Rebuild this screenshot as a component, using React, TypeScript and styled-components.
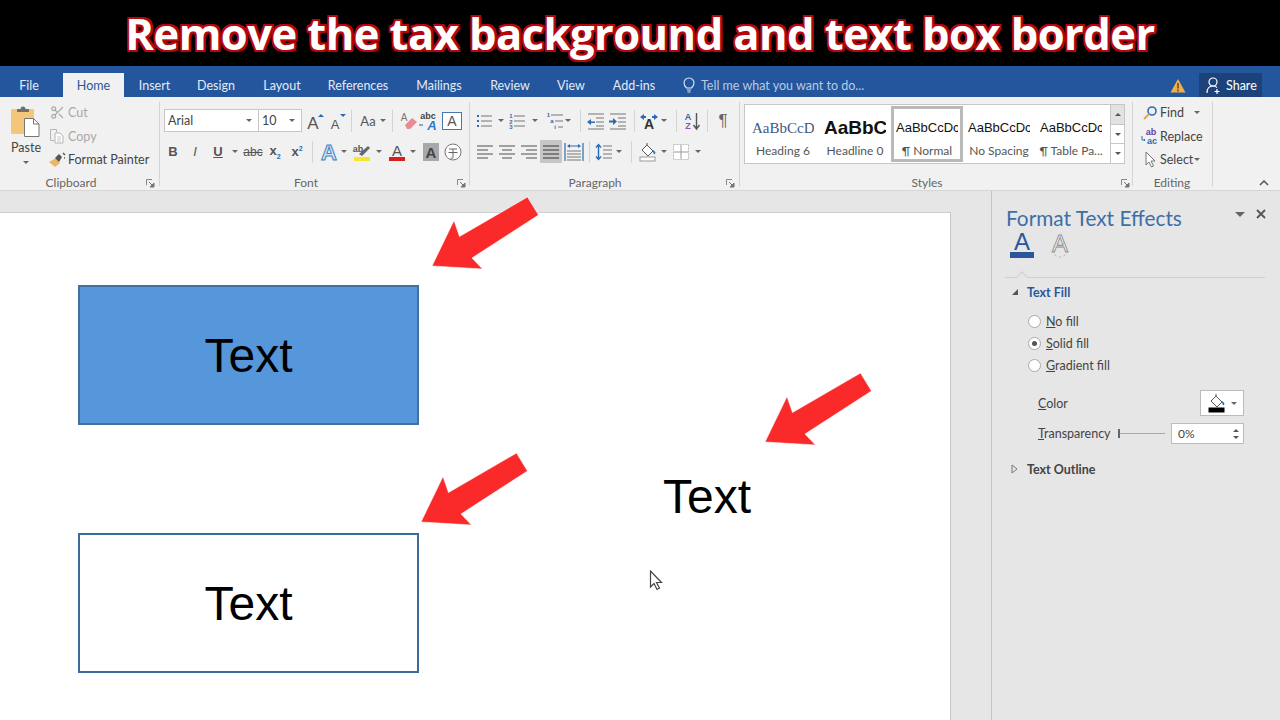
import React from 'react';
import styled, { createGlobalStyle } from 'styled-components';
import { Scissors } from 'lucide-react';

const UI_FONT = `Lato, "Open Sans", sans-serif`;

const GlobalStyle = createGlobalStyle`
    html, body {
        margin: 0;
        padding: 0;
        background: #fff;
    }
    * {
        box-sizing: border-box;
    }
`;

const Page = styled.div`
    display: flex;
    flex-direction: column;
    width: 1280px;
    height: 720px;
    overflow: hidden;
    font-family: ${UI_FONT};
    font-size: 12.5px;
    color: #444;
`;

const Banner = styled.h1`
    flex: 0 0 66px;
    margin: 0;
    display: flex;
    align-items: center;
    justify-content: center;
    background: #000;
    color: #fff;
    font-family: "Open Sans", sans-serif;
    font-size: 43.5px;
    font-weight: 700;
    letter-spacing: -0.55px;
    white-space: nowrap;
    text-shadow: 2px 0 0 #b5060b, -2px 0 0 #b5060b, 0 2px 0 #b5060b, 0 -2px 0 #b5060b,
        2px 2px 0 #b5060b, -2px 2px 0 #b5060b, 2px -2px 0 #b5060b, -2px -2px 0 #b5060b;
`;

const TabBar = styled.div`
    flex: 0 0 31px;
    display: flex;
    align-items: flex-end;
    background: #23569c;
    color: #e4ebf5;
`;

const Tab = styled.div<{ $w: number; $ml?: number; $active?: boolean }>`
    display: flex;
    align-items: center;
    justify-content: center;
    width: ${({ $w }) => $w}px;
    height: 24px;
    margin-left: ${({ $ml }) => $ml ?? 0}px;
    background: ${({ $active }) => ($active ? '#f1f1f1' : 'transparent')};
    color: ${({ $active }) => ($active ? '#2b579a' : 'inherit')};
`;

const TellMe = styled.div`
    display: flex;
    align-items: center;
    gap: 6px;
    height: 24px;
    margin-left: 16px;
    color: #b9cbe4;
`;

const WarnSlot = styled.div`
    display: flex;
    align-items: center;
    height: 24px;
    margin-left: auto;
    margin-right: 13px;
`;

const ShareButton = styled.div`
    display: flex;
    align-items: center;
    gap: 5px;
    width: 63px;
    height: 24px;
    margin-right: 18px;
    padding-left: 7px;
    background: #1c4279;
    color: #fff;
`;

const Ribbon = styled.div`
    flex: 0 0 94px;
    display: flex;
    position: relative;
    background: #f1f1f1;
    border-bottom: 1px solid #d6d6d6;
`;

const Group = styled.div<{ $w: number }>`
    position: relative;
    flex: 0 0 ${({ $w }) => $w}px;
    padding-top: 12px;
    &::after {
        content: '';
        position: absolute;
        right: 0;
        top: 5px;
        bottom: 4px;
        width: 1px;
        background: #d4d4d4;
    }
`;

const GroupLabel = styled.div<{ $center: number }>`
    position: absolute;
    top: 78px;
    left: ${({ $center }) => $center}px;
    transform: translateX(-50%);
    color: #666;
    font-size: 12px;
    line-height: 16px;
`;

const Launcher = styled.svg<{ $left: number }>`
    position: absolute;
    top: 82px;
    left: ${({ $left }) => $left}px;
`;

const ToolRow = styled.div<{ $top?: number; $pl?: number }>`
    display: flex;
    align-items: center;
    height: 23px;
    margin-top: ${({ $top }) => $top ?? 0}px;
    padding-left: ${({ $pl }) => $pl ?? 0}px;
`;

const Tool = styled.div<{ $w?: number; $ml?: number; $on?: boolean }>`
    display: flex;
    align-items: center;
    justify-content: center;
    flex: 0 0 ${({ $w }) => $w ?? 22}px;
    height: 23px;
    margin-left: ${({ $ml }) => $ml ?? 0}px;
    background: ${({ $on }) => ($on ? '#c6c6c6' : 'transparent')};
    font-size: 13px;
    color: #555;
`;

const Caret = styled.span<{ $w?: number; $ml?: number }>`
    flex: 0 0 ${({ $w }) => $w ?? 8}px;
    margin-left: ${({ $ml }) => $ml ?? 0}px;
    height: 4px;
    position: relative;
    &::before {
        content: '';
        position: absolute;
        left: 50%;
        top: 0;
        margin-left: -3px;
        border-left: 3px solid transparent;
        border-right: 3px solid transparent;
        border-top: 3px solid #666;
    }
`;

const Divider = styled.span<{ $ml: number; $mr?: number }>`
    flex: 0 0 1px;
    height: 22px;
    margin-left: ${({ $ml }) => $ml}px;
    margin-right: ${({ $mr }) => $mr ?? 0}px;
    background: #d4d4d4;
`;

const ClipboardBody = styled.div`
    display: flex;
    margin-top: -4px;
`;

const PasteColumn = styled.div`
    display: flex;
    flex-direction: column;
    align-items: center;
    flex: 0 0 49px;
    padding-left: 3px;
    padding-top: 1px;
    font-size: 12.5px;
    color: #444;
`;

const PasteLabel = styled.span`
    margin-top: 3px;
    line-height: 16px;
`;

const PasteCaret = styled.span`
    margin-top: 5px;
    border-left: 3px solid transparent;
    border-right: 3px solid transparent;
    border-top: 3px solid #666;
`;

const ClipList = styled.div`
    display: flex;
    flex-direction: column;
    margin-top: -4px;
`;

const ClipRow = styled.div<{ $muted?: boolean }>`
    display: flex;
    align-items: center;
    height: 23.5px;
    gap: 3px;
    color: ${({ $muted }) => ($muted ? '#a8a8a8' : '#444')};
`;

const ClipIcon = styled.span`
    display: flex;
    justify-content: center;
    width: 16px;
`;

const ComboBox = styled.div<{ $w: number }>`
    display: flex;
    align-items: center;
    justify-content: space-between;
    width: ${({ $w }) => $w}px;
    height: 23px;
    padding: 0 6px 0 3px;
    background: #fff;
    border: 1px solid #c6c6c6;
    color: #444;
    &:not(:first-child) {
        margin-left: -1px;
    }
`;

const DownTriangle = styled.span`
    border-left: 3px solid transparent;
    border-right: 3px solid transparent;
    border-top: 3px solid #666;
`;

const Gallery = styled.div`
    display: flex;
    width: 381px;
    height: 60px;
    margin: -5px 0 0 4px;
    padding-left: 2px;
    background: #fff;
    border: 1px solid #c6c6c6;
`;

const StyleCell = styled.div<{ $active?: boolean }>`
    flex: 0 0 72px;
    display: flex;
    flex-direction: column;
    align-items: center;
    justify-content: space-between;
    padding: ${({ $active }) => ($active ? '7px 0 0' : '10px 0 3px')};
    overflow: hidden;
    border: ${({ $active }) => ($active ? '3px solid #b9b9b9' : 'none')};
    margin: 1px 0;
`;

const StylePreview = styled.div<{ $kind: 'serif' | 'heavy' | 'plain' }>`
    width: 62px;
    height: 24px;
    overflow: hidden;
    white-space: nowrap;
    line-height: 24px;
    text-align: ${({ $kind }) => ($kind === 'heavy' ? 'center' : 'left')};
    font-family: ${({ $kind }) =>
        $kind === 'serif' ? '"Liberation Serif", serif' : '"Liberation Sans", sans-serif'};
    font-size: ${({ $kind }) => ({ serif: '15px', heavy: '19px', plain: '13px' }[$kind])};
    font-weight: ${({ $kind }) => ($kind === 'heavy' ? 700 : 400)};
    color: ${({ $kind }) => ($kind === 'serif' ? '#3c5a80' : '#111')};
`;

const StyleName = styled.div`
    font-size: 12px;
    line-height: 16px;
    color: #555;
    white-space: nowrap;
`;

const GalleryScroll = styled.div`
    display: flex;
    flex-direction: column;
    width: 14px;
    margin-left: 3px;
`;

const ScrollCell = styled.div<{ $flat?: boolean }>`
    flex: 1;
    display: flex;
    align-items: center;
    justify-content: center;
    background: ${({ $flat }) => ($flat ? '#e2e2e2' : '#fff')};
    border-left: 1px solid #c6c6c6;
    & + & {
        border-top: 1px solid #c6c6c6;
    }
`;

const EditList = styled.div`
    display: flex;
    flex-direction: column;
    margin-top: -8px;
    padding-left: 6px;
`;

const EditRow = styled.div`
    display: flex;
    align-items: center;
    height: 23.5px;
    color: #444;
`;

const EditIcon = styled.span`
    display: flex;
    justify-content: center;
    width: 21px;
`;

const CollapseSlot = styled.div`
    position: absolute;
    top: 83px;
    right: 11px;
    line-height: 0;
`;

const Workspace = styled.div`
    flex: 1;
    display: flex;
    min-height: 0;
`;

const DocColumn = styled.div`
    flex: 0 0 992px;
    display: flex;
    flex-direction: column;
    background: #e6e6e6;
    border-right: 1px solid #c4c4c4;
`;

const DocGap = styled.div`
    flex: 0 0 21px;
`;

const Sheet = styled.div`
    position: relative;
    flex: 1;
    width: 951px;
    background: #fff;
    border-top: 1px solid #cfcfcf;
    border-right: 1px solid #c6c6c6;
`;

const TextShape = styled.div<{ $top: number; $filled?: boolean }>`
    position: absolute;
    left: 78px;
    top: ${({ $top }) => $top}px;
    display: flex;
    align-items: center;
    justify-content: center;
    width: 341px;
    height: 140px;
    background: ${({ $filled }) => ($filled ? '#5597da' : '#fff')};
    border: 2px solid ${({ $filled }) => ($filled ? '#41719c' : '#3c6a9c')};
    font-family: "Liberation Sans", Arial, sans-serif;
    font-size: 48px;
    color: #000;
`;

const LooseText = styled.div`
    position: absolute;
    left: 663px;
    top: 258px;
    font-family: "Liberation Sans", Arial, sans-serif;
    font-size: 48px;
    line-height: 52px;
    color: #000;
`;

const ArrowMark = styled.svg<{ $left: number; $top: number }>`
    position: absolute;
    left: ${({ $left }) => $left}px;
    top: ${({ $top }) => $top}px;
`;

const MouseCursor = styled.svg`
    position: absolute;
    left: 649px;
    top: 357px;
`;

const Pane = styled.aside`
    flex: 1;
    background: #e6e6e6;
    padding: 12px 0 0 14px;
`;

const PaneHeader = styled.div`
    display: flex;
    align-items: center;
    height: 28px;
`;

const PaneTitle = styled.div`
    font-size: 20.8px;
    color: #3d6ea8;
    white-space: nowrap;
`;

const PaneControls = styled.div`
    display: flex;
    align-items: center;
    gap: 11px;
    margin-left: auto;
    margin-right: 14px;
    margin-top: -6px;
`;

const PaneMenuArrow = styled.span`
    border-left: 5px solid transparent;
    border-right: 5px solid transparent;
    border-top: 5px solid #666;
`;

const PaneTabs = styled.div`
    display: flex;
    gap: 15px;
    height: 28px;
    margin: 0 0 0 4px;
`;

const PaneRule = styled.div`
    position: relative;
    width: 260px;
    height: 1px;
    margin: 18px 0 0 -1px;
    background: #cfcfcf;
    &::after {
        content: '';
        position: absolute;
        left: 13px;
        top: -4px;
        width: 7px;
        height: 7px;
        background: #e6e6e6;
        border-left: 1px solid #cfcfcf;
        border-top: 1px solid #cfcfcf;
        transform: rotate(45deg);
    }
`;

const SectionHead = styled.div<{ $top: number; $open?: boolean }>`
    display: flex;
    align-items: center;
    height: 20px;
    margin-top: ${({ $top }) => $top}px;
    font-weight: 700;
    font-size: 12.5px;
    color: ${({ $open }) => ($open ? '#2b579a' : '#444')};
`;

const SectionToggle = styled.span`
    display: flex;
    flex: 0 0 21px;
    padding-left: 5px;
`;

const RadioList = styled.div`
    margin-top: 8px;
    padding-left: 22px;
`;

const RadioRow = styled.div`
    display: flex;
    align-items: center;
    gap: 5px;
    height: 22px;
`;

const RadioDot = styled.span<{ $on?: boolean }>`
    display: flex;
    align-items: center;
    justify-content: center;
    width: 13px;
    height: 13px;
    border-radius: 50%;
    background: #fff;
    border: 1px solid #a9a9a9;
    &::after {
        content: '';
        width: 5px;
        height: 5px;
        border-radius: 50%;
        background: ${({ $on }) => ($on ? '#555' : 'transparent')};
    }
`;

const FieldRow = styled.div<{ $top: number; $h: number }>`
    display: flex;
    align-items: center;
    width: 238px;
    height: ${({ $h }) => $h}px;
    margin-top: ${({ $top }) => $top}px;
    padding-left: 32px;
`;

const FieldLabel = styled.span<{ $w: number }>`
    flex: 0 0 ${({ $w }) => $w}px;
`;

const ColorButton = styled.div`
    display: flex;
    align-items: center;
    justify-content: center;
    gap: 5px;
    width: 44px;
    height: 26px;
    margin-left: auto;
    background: #fff;
    border: 1px solid #bcbcbc;
`;

const Slider = styled.div`
    position: relative;
    flex: 0 0 47px;
    height: 1px;
    background: #a8a8a8;
    &::before {
        content: '';
        position: absolute;
        left: 0;
        top: -4px;
        width: 2px;
        height: 9px;
        background: #666;
    }
`;

const SpinBox = styled.div`
    display: flex;
    align-items: center;
    justify-content: space-between;
    width: 73px;
    height: 21px;
    margin-left: 6px;
    padding: 0 4px 0 6px;
    background: #fff;
    border: 1px solid #bcbcbc;
    font-size: 12px;
`;

const SpinArrows = styled.span`
    display: flex;
    flex-direction: column;
    gap: 4px;
`;

const SpinUp = styled.span`
    border-left: 3px solid transparent;
    border-right: 3px solid transparent;
    border-bottom: 3px solid #555;
`;

const SpinDown = styled.span`
    border-left: 3px solid transparent;
    border-right: 3px solid transparent;
    border-top: 3px solid #555;
`;

const Glyph2 = styled.span<{ $bold?: boolean; $italic?: boolean; $under?: boolean }>`
    font-family: "Liberation Sans", sans-serif;
    font-size: 13px;
    font-weight: ${({ $bold, $under }) => ($bold || $under ? 700 : 400)};
    font-style: ${({ $italic }) => ($italic ? 'italic' : 'normal')};
    text-decoration: ${({ $under }) => ($under ? 'underline' : 'none')};
`;

const Strike = styled.span`
    font-family: "Liberation Sans", sans-serif;
    font-size: 12px;
    text-decoration: line-through;
`;

const Sub = styled.sub`
    font-size: 7px;
    color: #2b6cb0;
`;

const Sup = styled.sup`
    font-size: 7px;
    color: #2b6cb0;
`;

const Pilcrow = styled.span`
    font-family: "Liberation Sans", sans-serif;
    font-size: 17px;
    color: #666;
`;

const Glyph = (p: {
    x: number;
    y: number;
    size: number;
    fill?: string;
    bold?: boolean;
    italic?: boolean;
    serif?: boolean;
    children: React.ReactNode;
}) => (
    <text
        x={p.x}
        y={p.y}
        fontSize={p.size}
        fill={p.fill ?? '#555'}
        fontWeight={p.bold ? 700 : 400}
        fontStyle={p.italic ? 'italic' : 'normal'}
        fontFamily={p.serif ? '"Liberation Serif", serif' : '"Liberation Sans", sans-serif'}
        textAnchor="middle"
    >
        {p.children}
    </text>
);

const Icon = ({ w = 20, h = 20, children }: { w?: number; h?: number; children: React.ReactNode }) => (
    <svg width={w} height={h} viewBox={`0 0 ${w} ${h}`} overflow="visible">
        {children}
    </svg>
);

const PasteIcon = () => (
    <Icon w={30} h={31}>
        <rect x="0" y="3" width="23" height="25" rx="1" fill="#f4c67c" />
        <path d="M6 6V3h3.500a2.500 2.500 0 0 1 5 0H18v3z" fill="#6f6f6f" />
        <path d="M13.500 12.500h9l5.500 5.500v12.500H13.500z" fill="#fff" stroke="#777" />
        <path d="M22.500 12.500V18H28" fill="none" stroke="#777" />
    </Icon>
);

const CopyIcon = () => (
    <Icon w={16} h={16}>
        <path d="M1.500 1.500h6v3M1.500 1.500v11h4" fill="none" stroke="#b5b5b5" />
        <path d="M6 5h5l3 3v7H6z" fill="#fff" stroke="#b5b5b5" />
        <path d="M8 9h4M8 11h4M8 13h4" stroke="#c5c5c5" />
    </Icon>
);

const BrushIcon = () => (
    <Icon w={18} h={16}>
        <path d="M1 10l7-4 4 5-5 4z" fill="#eeb566" />
        <path d="M7 6l4-4 3 3-3 5z" fill="#555" />
        <path d="M15 1l2 2M16 6l1 0" stroke="#555" strokeWidth="1.4" />
    </Icon>
);

const Launch = ({ left }: { left: number }) => (
    <Launcher $left={left} width="9" height="9" viewBox="0 0 9 9">
        <path d="M.5 6V.5H6" fill="none" stroke="#888" />
        <path d="M3 3l4 4M8 4v4H4z" stroke="#777" fill="#777" />
    </Launcher>
);

const ListLines = ({ x = 6, w = 11 }: { x?: number; w?: number }) => (
    <path d={`M${x} 5h${w}M${x} 10h${w}M${x} 15h${w}`} stroke="#777" strokeWidth="1.2" />
);

const BulletIcon = () => (
    <Icon>
        <ListLines />
        <path d="M2 5h2M2 10h2M2 15h2" stroke="#2b6cb0" strokeWidth="2.2" />
    </Icon>
);

const NumberIcon = () => (
    <Icon>
        <ListLines />
        <Glyph x={3} y={7} size={6} fill="#2b6cb0" bold>1</Glyph>
        <Glyph x={3} y={12.5} size={6} fill="#2b6cb0" bold>2</Glyph>
        <Glyph x={3} y={18} size={6} fill="#2b6cb0" bold>3</Glyph>
    </Icon>
);

const MultiIcon = () => (
    <Icon w={18}>
        <path d="M5 4h12M9 10h8M12 16h5" stroke="#777" strokeWidth="1.2" />
        <Glyph x={2.5} y={6} size={6} fill="#2b6cb0" bold>1</Glyph>
        <Glyph x={6} y={12} size={6} fill="#2b6cb0" bold>a</Glyph>
        <Glyph x={9} y={18} size={6} fill="#2b6cb0" bold>i</Glyph>
    </Icon>
);

const IndentIcon = ({ flip }: { flip?: boolean }) => (
    <Icon>
        <path d="M2 3h16M10 7h8M10 11h8M10 15h8M2 18h16" stroke="#777" strokeWidth="1.1" />
        {flip ? (
            <path d="M9 10.500H5V8l-4 3 4 3v-2h4z" fill="#2b6cb0" />
        ) : (
            <path d="M1 9.500h4V7l4 3.500L5 14v-2.500H1z" fill="#2b6cb0" />
        )}
    </Icon>
);

const TextDirIcon = () => (
    <Icon>
        <Glyph x={10} y={18} size={14} fill="#333" bold>A</Glyph>
        <path d="M1 6l4-3v2h2v2H5v2zM19 6l-4-3v2h-2v2h2v2z" fill="#2b6cb0" />
    </Icon>
);

const SortIcon = () => (
    <Icon>
        <Glyph x={6} y={9} size={9} fill="#2b6cb0" bold>A</Glyph>
        <Glyph x={6} y={18} size={9} fill="#9a4fb5" bold>Z</Glyph>
        <path d="M14.500 2v15M11.500 14l3 4 3-4" fill="none" stroke="#555" strokeWidth="1.4" />
    </Icon>
);

const AlignIcon = ({ mode }: { mode: 'left' | 'center' | 'right' | 'full' }) => {
    const paths = {
        left: 'M2 4h16M2 8h11M2 12h16M2 16h11',
        center: 'M2 4h16M5 8h10M2 12h16M5 16h10',
        right: 'M2 4h16M7 8h11M2 12h16M7 16h11',
        full: 'M2 4h16M2 8h16M2 12h16M2 16h16',
    };
    return (
        <Icon>
            <path d={paths[mode]} stroke={mode === 'full' ? '#666' : '#858585'} strokeWidth="1.3" />
        </Icon>
    );
};

const DistributeIcon = () => (
    <Icon>
        <path d="M1 1v18M19 1v18" stroke="#2b6cb0" strokeWidth="1.2" />
        <path d="M3 9h14M3 12h14M3 15h14M3 18h14" stroke="#777" />
        <path d="M3 4l3-2v1.500h8V2l3 2-3 2V4.500H6V6z" fill="#2b6cb0" />
    </Icon>
);

const LineSpacingIcon = () => (
    <Icon>
        <path d="M9 4h9M9 8h9M9 12h9M9 16h9" stroke="#777" strokeWidth="1.2" />
        <path d="M4.500 3v14M2 5.500l2.500-3 2.500 3M2 14.500l2.500 3 2.500-3" fill="none" stroke="#2b6cb0" strokeWidth="1.4" />
    </Icon>
);

const BucketIcon = ({ bar = '#fff' }: { bar?: string }) => (
    <Icon w={18} h={18}>
        <path d="M8 2l6 6-5 5-6-6z" fill="#fff" stroke="#555" />
        <path d="M8 2V0" stroke="#555" />
        <path d="M14 7c2 1 3 3 2 4s-2-1-2-4z" fill="#2b6cb0" />
        <rect x="1" y="14" width="15" height="4" fill={bar} stroke={bar === '#fff' ? '#999' : bar} />
    </Icon>
);

const BordersIcon = () => (
    <Icon>
        <rect x="2.500" y="2.500" width="15" height="15" fill="#fff" stroke="#bbb" strokeDasharray="2 1" />
        <path d="M10 3v14M3 10h14" stroke="#999" />
    </Icon>
);

const GrowFontIcon = ({ shrink }: { shrink?: boolean }) => (
    <Icon>
        <Glyph x={8} y={18} size={shrink ? 13 : 17}>A</Glyph>
        {shrink ? (
            <path d="M13 3h6l-3 3z" fill="#2b6cb0" />
        ) : (
            <path d="M13 6h6l-3-3z" fill="#2b6cb0" />
        )}
    </Icon>
);

const EraserIcon = () => (
    <Icon>
        <Glyph x={6} y={10} size={10} fill="#777">A</Glyph>
        <path d="M7 14l7-7 5 4-7 7h-3z" fill="#ea8a92" />
    </Icon>
);

const TextEffectIcon = () => (
    <Icon w={22}>
        <Glyph x={9} y={8} size={9} fill="#444" bold>abc</Glyph>
        <Glyph x={13} y={19} size={13} fill="#2b7cd3" bold italic>A</Glyph>
        <path d="M0 14h4" stroke="#2b7cd3" strokeWidth="1.2" />
    </Icon>
);

const BoxedAIcon = () => (
    <Icon>
        <rect x=".5" y="1.500" width="19" height="17" fill="#fff" stroke="#4a78ad" />
        <Glyph x={10} y={15} size={14}>A</Glyph>
    </Icon>
);

const OutlineAIcon = () => (
    <Icon w={22} h={22}>
        <Glyph x={11} y={19} size={22} fill="#d5e6f7" bold>A</Glyph>
        <text
            x="11"
            y="19"
            fontSize="22"
            fontWeight="700"
            textAnchor="middle"
            fontFamily={'"Liberation Sans", sans-serif'}
            fill="none"
            stroke="#3f7fc4"
            strokeWidth="1"
        >
            A
        </text>
    </Icon>
);

const HighlightIcon = () => (
    <Icon w={20} h={20}>
        <Glyph x={6} y={10} size={9} fill="#555" bold>ab</Glyph>
        <path d="M7 12l9-8 2 2-8 8z" fill="#666" />
        <rect x="2" y="15" width="16" height="4" fill="#f7e62e" />
    </Icon>
);

const FontColorIcon = () => (
    <Icon w={20} h={20}>
        <Glyph x={10} y={14} size={15}>A</Glyph>
        <rect x="2" y="15" width="16" height="4" fill="#d81f1f" />
    </Icon>
);

const ShadedAIcon = () => (
    <Icon w={16} h={18}>
        <rect width="16" height="18" y="0" fill="#a8a8a8" />
        <Glyph x={8} y={15} size={15} fill="#444" bold>A</Glyph>
    </Icon>
);

const EnclosedIcon = () => (
    <Icon>
        <circle cx="10" cy="10" r="8" fill="#fff" stroke="#777" />
        <path d="M6 7h8M5.500 10.500h9M10 7v8c0 1.500-1 1.500-2.500 1" fill="none" stroke="#666" />
    </Icon>
);

const FindIcon = () => (
    <Icon w={16} h={16}>
        <circle cx="10" cy="6" r="4" fill="none" stroke="#2b6cb0" strokeWidth="1.6" />
        <path d="M7 9l-5 5" stroke="#e0a94d" strokeWidth="2" />
    </Icon>
);

const ReplaceIcon = () => (
    <Icon w={18} h={18}>
        <Glyph x={10} y={8} size={9} fill="#6b3fa0" bold>ab</Glyph>
        <Glyph x={11} y={16.500} size={9} fill="#2b6cb0" bold>ac</Glyph>
        <path d="M1 9v4h2M3 12l1 1-1 1" fill="none" stroke="#2b6cb0" />
    </Icon>
);

const SelectIcon = () => (
    <Icon w={14} h={18}>
        <path d="M3 1v13l3-3 2.500 5 2-1-2.500-5h4z" fill="#fff" stroke="#777" />
    </Icon>
);

const BulbIcon = () => (
    <Icon w={12} h={16}>
        <path
            d="M3.500 11C2 9.500 1 8.500 1 6a5 5 0 0 1 10 0c0 2.500-1 3.500-2.500 5zM4 13h4M4.500 15h3"
            fill="none"
            stroke="#dfe8f4"
            strokeWidth="1.1"
        />
    </Icon>
);

const WarnIcon = () => (
    <Icon w={16} h={15}>
        <path d="M8 1l7.500 13.500H.5z" fill="#eeb04f" />
        <path d="M8 5v5.500M8 11.500v2" stroke="#7a4a10" strokeWidth="1.6" />
    </Icon>
);

const ShareIcon = () => (
    <Icon w={15} h={17}>
        <circle cx="7" cy="5" r="4" fill="none" stroke="#fff" strokeWidth="1.2" />
        <path d="M1 16c0-5 2-7 6-7 2 0 3 .5 4 1.500M11 12v5M8.500 14.500h5" fill="none" stroke="#fff" strokeWidth="1.2" />
    </Icon>
);

const ArrowShape = ({ left, top }: { left: number; top: number }) => (
    <ArrowMark $left={left} $top={top} width="110" height="76" viewBox="0 0 110 76">
        <path
            d="M0 71L22 25.500 27.500 41.500 95.500 2 106.500 20 40 63 50.500 74z"
            fill="#fb2a2a"
            stroke="#fff"
            strokeWidth="0.6"
        />
    </ArrowMark>
);

const tabs: [string, number, number?, boolean?][] = [
    ['File', 58],
    ['Home', 61, 5, true],
    ['Insert', 61],
    ['Design', 62],
    ['Layout', 70],
    ['References', 82],
    ['Mailings', 80],
    ['Review', 62],
    ['View', 60],
    ['Add-ins', 66],
];

const styleCells = [
    { preview: 'AaBbCcDc', name: 'Heading 6', kind: 'serif' as const },
    { preview: 'AaBbCcDc', name: 'Headline 0', kind: 'heavy' as const },
    { preview: 'AaBbCcDc', name: '¶ Normal', kind: 'plain' as const, active: true },
    { preview: 'AaBbCcDc', name: 'No Spacing', kind: 'plain' as const },
    { preview: 'AaBbCcDc', name: '¶ Table Pa...', kind: 'plain' as const },
];

const App = () => (
    <>
        <GlobalStyle />
        <Page>
            <Banner>Remove the tax background and text box border</Banner>

            <TabBar>
                {tabs.map(([label, w, ml, active]) => (
                    <Tab key={label} $w={w} $ml={ml} $active={active}>
                        {label}
                    </Tab>
                ))}
                <TellMe>
                    <BulbIcon />
                    Tell me what you want to do...
                </TellMe>
                <WarnSlot>
                    <WarnIcon />
                </WarnSlot>
                <ShareButton>
                    <ShareIcon />
                    Share
                </ShareButton>
            </TabBar>

            <Ribbon>
                <Group $w={160}>
                    <ClipboardBody>
                        <PasteColumn>
                            <PasteIcon />
                            <PasteLabel>Paste</PasteLabel>
                            <PasteCaret />
                        </PasteColumn>
                        <ClipList>
                            <ClipRow $muted>
                                <ClipIcon>
                                    <Scissors size={15} color="#aaa" />
                                </ClipIcon>
                                Cut
                            </ClipRow>
                            <ClipRow $muted>
                                <ClipIcon>
                                    <CopyIcon />
                                </ClipIcon>
                                Copy
                            </ClipRow>
                            <ClipRow>
                                <ClipIcon>
                                    <BrushIcon />
                                </ClipIcon>
                                Format Painter
                            </ClipRow>
                        </ClipList>
                    </ClipboardBody>
                    <GroupLabel $center={71}>Clipboard</GroupLabel>
                    <Launch left={146} />
                </Group>

                <Group $w={310}>
                    <ToolRow $pl={4}>
                        <ComboBox $w={95}>
                            Arial
                            <DownTriangle />
                        </ComboBox>
                        <ComboBox $w={44}>
                            10
                            <DownTriangle />
                        </ComboBox>
                        <Tool $ml={2}>
                            <GrowFontIcon />
                        </Tool>
                        <Tool>
                            <GrowFontIcon shrink />
                        </Tool>
                        <Divider $ml={3} />
                        <Tool $w={24} $ml={4}>
                            Aa
                        </Tool>
                        <Caret $w={6} />
                        <Divider $ml={6} $mr={4} />
                        <Tool>
                            <EraserIcon />
                        </Tool>
                        <Tool>
                            <TextEffectIcon />
                        </Tool>
                        <Tool>
                            <BoxedAIcon />
                        </Tool>
                    </ToolRow>
                    <ToolRow $top={8} $pl={2}>
                        <Tool>
                            <Glyph2 $bold>B</Glyph2>
                        </Tool>
                        <Tool>
                            <Glyph2 $italic>I</Glyph2>
                        </Tool>
                        <Tool $ml={1}>
                            <Glyph2 $under>U</Glyph2>
                        </Tool>
                        <Caret $w={11} />
                        <Tool $ml={2}>
                            <Strike>abc</Strike>
                        </Tool>
                        <Tool>
                            <Glyph2 $bold>
                                x<Sub>2</Sub>
                            </Glyph2>
                        </Tool>
                        <Tool>
                            <Glyph2 $bold>
                                x<Sup>2</Sup>
                            </Glyph2>
                        </Tool>
                        <Divider $ml={4} $mr={5} />
                        <Tool>
                            <OutlineAIcon />
                        </Tool>
                        <Caret $w={8} />
                        <Tool $ml={3}>
                            <HighlightIcon />
                        </Tool>
                        <Caret $w={12} />
                        <Tool $ml={1}>
                            <FontColorIcon />
                        </Tool>
                        <Caret $w={10} />
                        <Tool $ml={2}>
                            <ShadedAIcon />
                        </Tool>
                        <Tool>
                            <EnclosedIcon />
                        </Tool>
                    </ToolRow>
                    <GroupLabel $center={146}>Font</GroupLabel>
                    <Launch left={297} />
                </Group>

                <Group $w={270}>
                    <ToolRow $pl={4}>
                        <Tool>
                            <BulletIcon />
                        </Tool>
                        <Caret $w={10} />
                        <Tool $ml={1}>
                            <NumberIcon />
                        </Tool>
                        <Caret $w={12} />
                        <Tool $w={18} $ml={5}>
                            <MultiIcon />
                        </Tool>
                        <Caret $w={8} />
                        <Divider $ml={8} $mr={4} />
                        <Tool>
                            <IndentIcon flip />
                        </Tool>
                        <Tool>
                            <IndentIcon />
                        </Tool>
                        <Divider $ml={5} $mr={3} />
                        <Tool>
                            <TextDirIcon />
                        </Tool>
                        <Caret $w={8} />
                        <Divider $ml={8} $mr={4} />
                        <Tool>
                            <SortIcon />
                        </Tool>
                        <Divider $ml={4} $mr={4} />
                        <Tool>
                            <Pilcrow>¶</Pilcrow>
                        </Tool>
                    </ToolRow>
                    <ToolRow $top={8} $pl={4}>
                        <Tool>
                            <AlignIcon mode="left" />
                        </Tool>
                        <Tool>
                            <AlignIcon mode="center" />
                        </Tool>
                        <Tool>
                            <AlignIcon mode="right" />
                        </Tool>
                        <Tool $on>
                            <AlignIcon mode="full" />
                        </Tool>
                        <Tool $ml={1}>
                            <DistributeIcon />
                        </Tool>
                        <Divider $ml={4} $mr={3} />
                        <Tool>
                            <LineSpacingIcon />
                        </Tool>
                        <Caret $w={8} />
                        <Divider $ml={8} $mr={5} />
                        <Tool>
                            <BucketIcon />
                        </Tool>
                        <Caret $w={10} />
                        <Tool $ml={1}>
                            <BordersIcon />
                        </Tool>
                        <Caret $w={10} $ml={1} />
                    </ToolRow>
                    <GroupLabel $center={125}>Paragraph</GroupLabel>
                    <Launch left={256} />
                </Group>

                <Group $w={393}>
                    <Gallery>
                        {styleCells.map(c => (
                            <StyleCell key={c.name} $active={c.active}>
                                <StylePreview $kind={c.kind}>{c.preview}</StylePreview>
                                <StyleName>{c.name}</StyleName>
                            </StyleCell>
                        ))}
                        <GalleryScroll>
                            <ScrollCell $flat>
                                <SpinUp />
                            </ScrollCell>
                            <ScrollCell>
                                <SpinDown />
                            </ScrollCell>
                            <ScrollCell>
                                <SpinDown />
                            </ScrollCell>
                        </GalleryScroll>
                    </Gallery>
                    <GroupLabel $center={187}>Styles</GroupLabel>
                    <Launch left={381} />
                </Group>

                <Group $w={80}>
                    <EditList>
                        <EditRow>
                            <EditIcon>
                                <FindIcon />
                            </EditIcon>
                            Find
                            <Caret $w={8} $ml={9} />
                        </EditRow>
                        <EditRow>
                            <EditIcon>
                                <ReplaceIcon />
                            </EditIcon>
                            Replace
                        </EditRow>
                        <EditRow>
                            <EditIcon>
                                <SelectIcon />
                            </EditIcon>
                            Select
                            <Caret $w={8} />
                        </EditRow>
                    </EditList>
                    <GroupLabel $center={39}>Editing</GroupLabel>
                </Group>

                <CollapseSlot>
                    <svg width="10" height="6" viewBox="0 0 10 6">
                        <path d="M1 5l4-4 4 4" fill="none" stroke="#555" strokeWidth="1.5" />
                    </svg>
                </CollapseSlot>
            </Ribbon>

            <Workspace>
                <DocColumn>
                    <DocGap />
                    <Sheet>
                        <TextShape $top={72} $filled>
                            Text
                        </TextShape>
                        <TextShape $top={320}>Text</TextShape>
                        <LooseText>Text</LooseText>
                        <ArrowShape left={432} top={-18} />
                        <ArrowShape left={765} top={158} />
                        <ArrowShape left={421} top={238} />
                        <MouseCursor width="15" height="21" viewBox="0 0 15 21">
                            <path
                                d="M1.500 1v16l3.500-3.500 3 6 2.500-1.500-3-5.500h5z"
                                fill="#fff"
                                stroke="#444"
                                strokeWidth="1.2"
                            />
                        </MouseCursor>
                    </Sheet>
                </DocColumn>

                <Pane>
                    <PaneHeader>
                        <PaneTitle>Format Text Effects</PaneTitle>
                        <PaneControls>
                            <PaneMenuArrow />
                            <svg width="10" height="10" viewBox="0 0 10 10">
                                <path d="M1 1l8 8M9 1L1 9" stroke="#555" strokeWidth="1.8" />
                            </svg>
                        </PaneControls>
                    </PaneHeader>
                    <PaneTabs>
                        <Icon w={24} h={27}>
                            <Glyph x={12} y={19} size={24} fill="#2b579a">A</Glyph>
                            <rect x="0" y="21" width="24" height="6" fill="#2b579a" />
                        </Icon>
                        <Icon w={22} h={27}>
                            <text
                                x="11"
                                y="21"
                                fontSize="24"
                                textAnchor="middle"
                                fontFamily={'"Liberation Sans", sans-serif'}
                                fill="#f3f3f3"
                                stroke="#8a8a8a"
                                strokeWidth="0.8"
                            >
                                A
                            </text>
                            <circle cx="11" cy="19" r="7" fill="none" stroke="#aaa" strokeDasharray="2 3" />
                        </Icon>
                    </PaneTabs>
                    <PaneRule />

                    <SectionHead $top={4} $open>
                        <SectionToggle>
                            <svg width="8" height="8" viewBox="0 0 8 8">
                                <path d="M7 1v6H1z" fill="#555" />
                            </svg>
                        </SectionToggle>
                        Text Fill
                    </SectionHead>
                    <RadioList>
                        <RadioRow>
                            <RadioDot />
                            <span>
                                <u>N</u>o fill
                            </span>
                        </RadioRow>
                        <RadioRow>
                            <RadioDot $on />
                            <span>
                                <u>S</u>olid fill
                            </span>
                        </RadioRow>
                        <RadioRow>
                            <RadioDot />
                            <span>
                                <u>G</u>radient fill
                            </span>
                        </RadioRow>
                    </RadioList>
                    <FieldRow $top={14} $h={26}>
                        <span>
                            <u>C</u>olor
                        </span>
                        <ColorButton>
                            <BucketIcon bar="#000" />
                            <DownTriangle />
                        </ColorButton>
                    </FieldRow>
                    <FieldRow $top={7} $h={21}>
                        <FieldLabel $w={80}>
                            <u>T</u>ransparency
                        </FieldLabel>
                        <Slider />
                        <SpinBox>
                            0%
                            <SpinArrows>
                                <SpinUp />
                                <SpinDown />
                            </SpinArrows>
                        </SpinBox>
                    </FieldRow>
                    <SectionHead $top={15}>
                        <SectionToggle>
                            <svg width="7" height="10" viewBox="0 0 7 10">
                                <path d="M1 1l5 4-5 4z" fill="none" stroke="#777" />
                            </svg>
                        </SectionToggle>
                        Text Outline
                    </SectionHead>
                </Pane>
            </Workspace>
        </Page>
    </>
);

export default App;
